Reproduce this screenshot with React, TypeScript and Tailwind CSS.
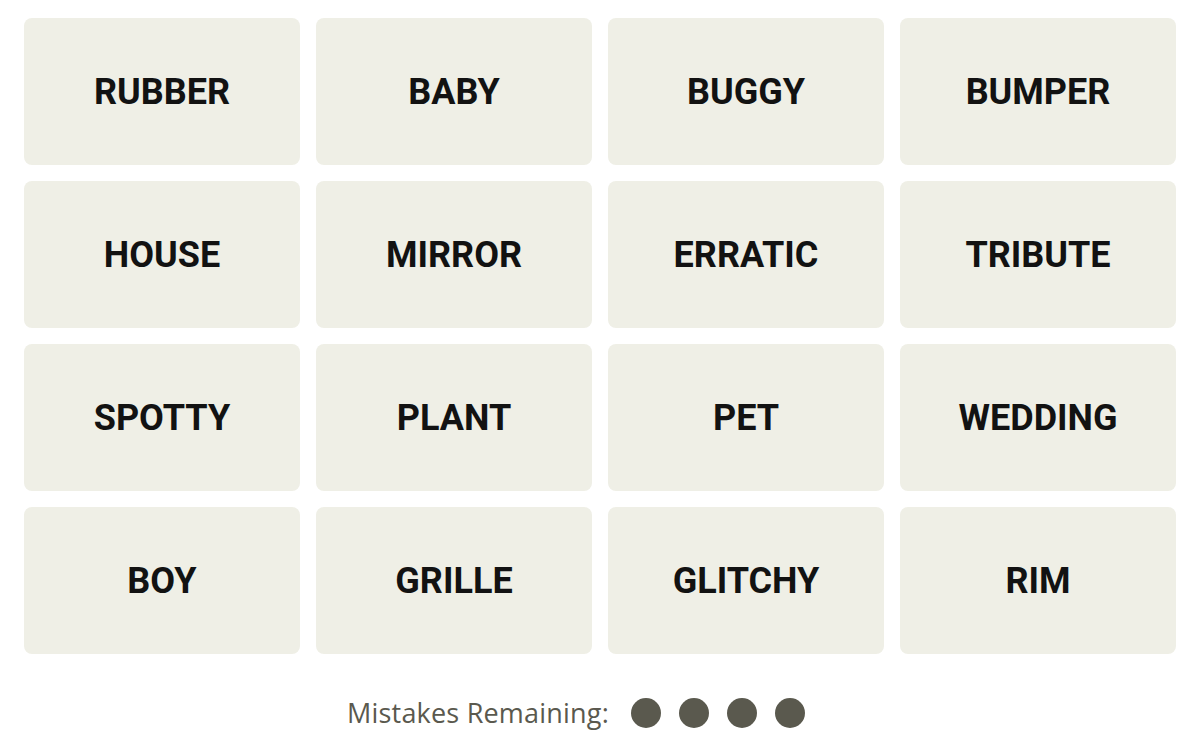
import React from "react";

const words = [
  "RUBBER", "BABY", "BUGGY", "BUMPER",
  "HOUSE", "MIRROR", "ERRATIC", "TRIBUTE",
  "SPOTTY", "PLANT", "PET", "WEDDING",
  "BOY", "GRILLE", "GLITCHY", "RIM",
];

export default function App() {
  return (
    <div className="w-[1200px] h-[750px] bg-white font-['Roboto','Liberation_Sans',sans-serif] px-6 pt-[18px]">
      <div className="grid grid-cols-4 gap-4">
        {words.map((w) => (
          <div
            key={w}
            className="h-[147px] rounded-lg bg-[#efefe6] flex items-center justify-center text-[36px] font-bold text-[#121212]"
          >
            {w}
          </div>
        ))}
      </div>
      <div className="flex items-center justify-center mt-[39px] gap-[22px] pr-[48px]">
        <span className="text-[27px] tracking-[0.2px] font-normal text-[#5a594e] font-['Open_Sans',sans-serif]">Mistakes Remaining:</span>
        <div className="flex gap-[18px]">
          {[0, 1, 2, 3].map((i) => (
            <span key={i} className="w-[30px] h-[30px] rounded-full bg-[#5a594e]" />
          ))}
        </div>
      </div>
    </div>
  );
}
